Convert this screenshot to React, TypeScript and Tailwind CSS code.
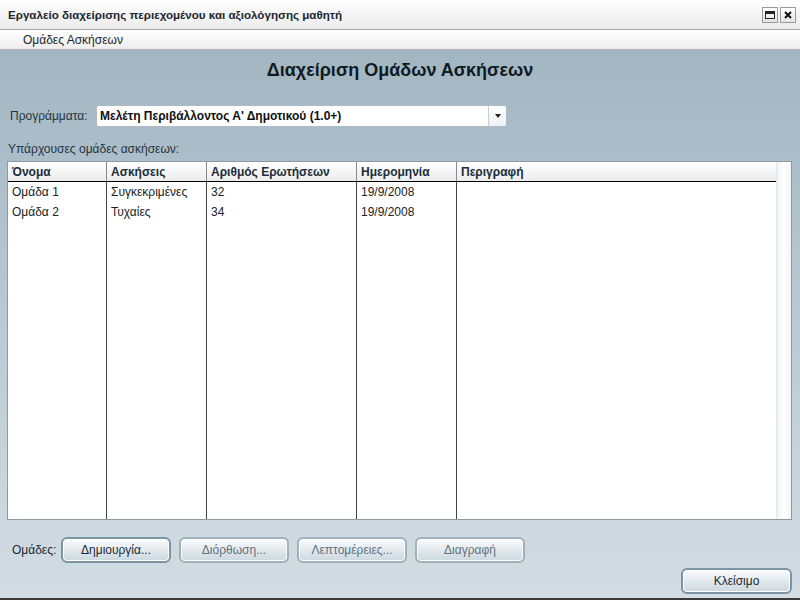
import React from "react";

const rows = [
  { name: "Ομάδα 1", type: "Συγκεκριμένες", count: "32", date: "19/9/2008", desc: "" },
  { name: "Ομάδα 2", type: "Τυχαίες", count: "34", date: "19/9/2008", desc: "" },
];

const cols = "grid grid-cols-[99px_100px_150px_100px_1fr]";

function Btn({ label, disabled, focused, w = "w-[110px]" }: { label: string; disabled?: boolean; focused?: boolean; w?: string }) {
  return (
    <button
      className={
        "h-[26px] rounded-[6px] border-2 bg-gradient-to-b from-[#fbfcfd] to-[#cbd7df] text-[12px] shadow-[inset_0_0_0_1px_#ffffff] " +
        w +
        " " +
        (focused ? "border-[#7b95a5] " : "border-[#9eb1bd] ") +
        (disabled ? "text-[#5f717c]" : "text-[#1d2a33]")
      }
    >
      {label}
    </button>
  );
}

export default function App() {
  return (
    <div className="w-[800px] h-[600px] flex flex-col overflow-hidden font-['Liberation_Sans',Arial,sans-serif] text-[12px]">
      {/* title bar */}
      <div className="h-[30px] shrink-0 flex items-center justify-between bg-gradient-to-b from-white to-[#ebebeb] border-b border-[#a6a6a6] pl-[8px] pr-[4px]">
        <span className="font-bold text-[11.6px] text-[#1b2630]">Εργαλείο διαχείρισης περιεχομένου και αξιολόγησης μαθητή</span>
        <div className="flex gap-[2px]">
          <div className="w-[16px] h-[16px] border border-[#9a9a9a] bg-gradient-to-b from-white to-[#e4e4e4] flex items-center justify-center">
            <div className="w-[10px] h-[8px] border border-[#222] border-t-[3px]" />
          </div>
          <div className="w-[16px] h-[16px] border border-[#9a9a9a] bg-gradient-to-b from-white to-[#e4e4e4] flex items-center justify-center">
            <svg width="8" height="8" viewBox="0 0 8 8">
              <path d="M1 1L7 7M7 1L1 7" stroke="#111" strokeWidth="2" />
            </svg>
          </div>
        </div>
      </div>
      {/* menu bar */}
      <div className="h-[20px] shrink-0 flex items-center bg-gradient-to-b from-white to-[#eeeeee] border-b border-[#b4b4b4] pl-[23px]">
        <span className="text-[12px] text-[#1b2630]">Ομάδες Ασκήσεων</span>
      </div>
      {/* body */}
      <div className="flex-1 flex flex-col bg-gradient-to-b from-[#a2b6c2] to-[#d3dde3] border-b-2 border-[#3a3a3a]">
        <div className="h-[40px] flex items-center justify-center">
          <h1 className="font-bold text-[18px] text-[#0f1a22]">Διαχείριση Ομάδων Ασκήσεων</h1>
        </div>
        <div className="mt-[15px] h-[22px] flex items-center pl-[10px]">
          <span className="w-[86px] text-[12px] text-[#24343e]">Προγράμματα:</span>
          <div className="w-[411px] h-[22px] flex bg-white border border-[#aebbc3] rounded-[3px]">
            <div className="flex-1 flex items-center pl-[3px] font-bold text-[12px] text-[#111]">
              Μελέτη Περιβάλλοντος Α' Δημοτικού (1.0+)
            </div>
            <div className="w-[18px] border-l border-[#c6cfd4] flex items-center justify-center bg-gradient-to-b from-white to-[#eef1f3] rounded-r-[3px]">
              <svg width="6" height="4" viewBox="0 0 6 4">
                <path d="M0 0H6L3 4Z" fill="#222" />
              </svg>
            </div>
          </div>
        </div>
        <div className="mt-[14px] h-[16px] flex items-center pl-[8px] text-[12px] text-[#24343e]">Υπάρχουσες ομάδες ασκήσεων:</div>
        <div className="mt-[4px] ml-[7px] w-[785px] h-[359px] border border-[#8d9aa2] bg-white flex">
          <div className="flex-1 flex flex-col">
            <div className={cols + " h-[20px] bg-gradient-to-b from-white to-[#ececec] border-b border-black"}>
              {["Όνομα", "Ασκήσεις", "Αριθμός Ερωτήσεων", "Ημερομηνία", "Περιγραφή"].map((h, i) => (
                <div
                  key={h}
                  className={"flex items-center pl-[4px] font-bold text-[12px] text-[#1c2d3a] " + (i < 4 ? "border-r border-[#8a8a8a]" : "")}
                >
                  {h}
                </div>
              ))}
            </div>
            {rows.map((r) => (
              <div key={r.name} className={cols + " h-[20px]"}>
                {[r.name, r.type, r.count, r.date, r.desc].map((c, i) => (
                  <div
                    key={i}
                    className={"flex items-center pl-[4px] text-[12px] text-[#222] " + (i < 4 ? "border-r border-[#444]" : "")}
                  >
                    {c}
                  </div>
                ))}
              </div>
            ))}
            <div className={cols + " flex-1"}>
              <div className="border-r border-[#444]" />
              <div className="border-r border-[#444]" />
              <div className="border-r border-[#444]" />
              <div className="border-r border-[#444]" />
              <div />
            </div>
          </div>
          <div className="w-[15px] bg-gradient-to-r from-[#f0f2f3] via-white to-[#f4f5f6] border-l border-[#e2e6e8]" />
        </div>
        <div className="mt-[17px] h-[26px] flex items-center pl-[12px]">
          <span className="w-[49px] text-[12px] text-[#1d2a33]">Ομάδες:</span>
          <div className="flex gap-[8px]">
            <Btn label="Δημιουργία..." focused />
            <Btn label="Διόρθωση..." disabled />
            <Btn label="Λεπτομέρειες..." disabled />
            <Btn label="Διαγραφή" disabled />
          </div>
        </div>
        <div className="mt-[5px] flex justify-end pr-[8px]">
          <Btn label="Κλείσιμο" w="w-[111px]" focused />
        </div>
      </div>
    </div>
  );
}
